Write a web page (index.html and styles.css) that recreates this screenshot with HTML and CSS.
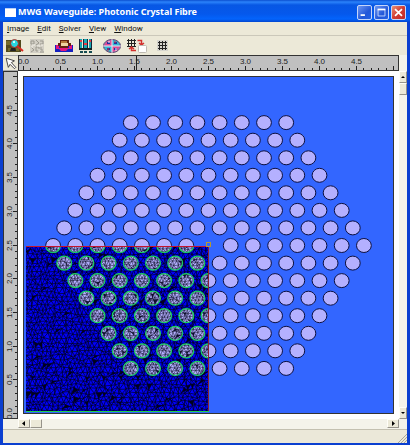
FILE: index.html
```html
<!DOCTYPE html>
<html lang="en">
<head>
<meta charset="utf-8">
<title>MWG Waveguide: Photonic Crystal Fibre</title>
<link rel="stylesheet" href="styles.css">
</head>
<body>
<div class="window">
  <header class="titlebar">
    <svg class="app-icon" viewBox="0 0 11 9"><rect width="11" height="9" fill="#fff"/><path d="M0 .5H11" stroke="#b8d0f8"/></svg>
    <h1 class="title">MWG Waveguide: Photonic Crystal Fibre</h1>
    <button class="caption" aria-label="Minimize"><svg viewBox="0 0 15 15"><path d="M3 10.5H8" stroke="#fff" stroke-width="2"/></svg></button>
    <button class="caption" aria-label="Maximize"><svg viewBox="0 0 15 15"><path d="M3.5 4V11.5H11.5V4" fill="none" stroke="#cfe0ff"/><path d="M3 4H12" stroke="#fff" stroke-width="2"/></svg></button>
    <button class="caption close" aria-label="Close"><svg viewBox="0 0 15 15"><path d="M3.5 3.5L11.5 11.5M11.5 3.5L3.5 11.5" stroke="#fff" stroke-width="2"/></svg></button>
  </header>
  <nav class="menubar">
    <button><u>I</u>mage</button><button><u>E</u>dit</button><button><u>S</u>olver</button><button><u>V</u>iew</button><button><u>W</u>indow</button>
  </nav>
  <div class="toolbar">
    <button class="tool" aria-label="Inspect image"><svg viewBox="0 0 18 14">
      <path d="M0 1H15V13H0Z" fill="#514a1d"/><path d="M0 2H4V6H0ZM2 9H6V12H2ZM10 9H13V12H10Z" fill="#756b2b"/><path d="M5 9H9L10 12H4Z" fill="#222"/>
      <circle cx="8.500" cy="4.500" r="4" fill="#27d7df" stroke="#b02a22"/><path d="M7 2H9V4H7Z" fill="#c8ffff"/><path d="M11 7L17 12" stroke="#d82920" stroke-width="2"/></svg></button>
    <button class="tool" aria-label="Materials" disabled><svg viewBox="0 0 14 14"><path d="M0 0H14V14H0Z" fill="#d2cfc5"/><g fill="none" stroke="#9b998f"><path d="M1 2H4V5H1ZM6 1L9 4L6 6M10 2H13V5H10M1 8L4 11L1 13M6 8H9V12H6ZM11 8V11H13M10 13H14"/></g><path d="M2 6H5M7 7H10M11 6H13M2 7V9M9 10V13" stroke="#f5f3eb"/></svg></button>
    <button class="tool gap" aria-label="Mode profile"><svg viewBox="0 0 18 14"><path d="M0 6H4L6 8H12L14 6H18V13H0Z" fill="#1622bf"/><path d="M1 6H4V9H14V6H17V10H13L11 12H6L4 10H1Z" fill="#e21680"/><path d="M5 1H14V4H16V7H13V9H5V7H3V4H5Z" fill="#63220e"/><path d="M6 2H12V4H6Z" fill="#b47838"/><path d="M6 4H13V7H6Z" fill="#efd3a0"/></svg></button>
    <button class="tool" aria-label="Layers"><svg viewBox="0 0 13 14"><path d="M0 0H3V9H0ZM5 0H8V9H5ZM10 0H13V9H10Z" fill="#18a8b0"/><path d="M.5 0V10M4.500 0V10M8.500 0V10M12.500 0V10" stroke="#16243c"/><path d="M1 2H3M5 5H8M10 2H12" stroke="#ed3942" stroke-width="2"/><path d="M0 9H13V11H0Z" fill="#122"/><path d="M1 12H4V14H1ZM5 12H8V14H5ZM10 12H13V14H10Z" fill="#174d52"/></svg></button>
    <button class="tool gap" aria-label="Field sectors"><svg viewBox="0 0 18 14"><ellipse cx="9" cy="7" rx="8.500" ry="6.500" fill="#36b5d3" stroke="#5b3b69"/><path d="M9 1A8 6 0 0 0 1 7H9ZM9 7H17A8 6 0 0 1 9 13Z" fill="#de4a96"/><path d="M9 0V14M0 7H18" stroke="#e8e8f4"/><path d="M4 4H7M11 4H14M4 10H7M11 10H14" stroke="#23319d" stroke-width="2"/><path d="M6 2V4M13 9V12" stroke="#fff"/><path d="M12 2V4M5 9V12" stroke="#d83546"/></svg></button>
    <button class="tool" aria-label="Swap mesh"><svg viewBox="0 0 20 14"><path d="M1.500 0V8M4.500 0V8M7.500 0V8M0 1.500H9M0 4.500H9M0 7.500H9" stroke="#222"/><path d="M10.500 1.500H14.500V5M12 4L14.500 6L17 4M9 11.500H4.500V8M2 10L4.500 8L7 10" fill="none" stroke="#d3302d" stroke-width="1.500"/><rect x="11.500" y="6.500" width="8" height="7" rx="1" fill="#fff" stroke="#bdbab2"/></svg></button>
    <button class="tool last" aria-label="Show mesh"><svg viewBox="0 0 11 11"><rect width="11" height="11" fill="#d6d5ce"/><path d="M2.500 1V10M5.500 1V10M8.500 1V10M1 2.500H10M1 5.500H10M1 8.500H10" stroke="#222"/></svg></button>
  </div>
  <main class="workspace">
    <button class="pointer" aria-label="Select"><svg viewBox="0 0 15 16"><path d="M2.500 2.500L12 5.500L8.500 7.500L13.500 13L12 14.500L7 9.500L5 13Z" fill="#fff" stroke="#333"/></svg></button>
    <svg class="ruler-top" id="rulerTop" viewBox="0 0 381 16" preserveAspectRatio="none"></svg>
    <svg class="ruler-left" id="rulerLeft" viewBox="0 0 15 348" preserveAspectRatio="none"></svg>
    <div class="canvas">
      <svg id="plot" viewBox="0 0 371 338" preserveAspectRatio="none" role="img" aria-label="Photonic crystal fibre cross-section"></svg>
    </div>
    <div class="scroll vertical">
      <button aria-label="Scroll up"><svg viewBox="0 0 6 10"><path d="M1 6L3 4L5 6Z"/></svg></button>
      <span class="thumb"></span>
      <span class="track"></span>
      <button aria-label="Scroll down"><svg viewBox="0 0 6 10"><path d="M1 4H5L3 6Z"/></svg></button>
    </div>
    <div class="scroll horizontal">
      <button aria-label="Scroll left"><svg viewBox="0 0 10 7"><path d="M6 1V6L3 3.500Z"/></svg></button>
      <span class="thumb"></span>
      <span class="track"></span>
      <button aria-label="Scroll right"><svg viewBox="0 0 10 7"><path d="M4 1V6L7 3.500Z"/></svg></button>
    </div>
  </main>
  <footer class="statusbar">
    <svg viewBox="0 0 9 9"><path d="M0 9L9 0M3 9L9 3M6 9L9 6" stroke="#aaa797"/></svg>
  </footer>
</div>
<script src="plot.js"></script>
</body>
</html>
```

FILE: styles.css
```css
* { box-sizing: border-box; }
body { margin: 0; font-family: Roboto, "Noto Sans", sans-serif; background: #ece9d8; }
button { border: 0; padding: 0; margin: 0; background: none; font: inherit; color: inherit; }
svg { display: block; }
.window {
  min-height: 100vh;
  display: grid;
  grid-template-rows: 22px 14px 19px 1fr 14px;
  border: solid #0b3fd0;
  border-width: 0 3px 3px;
  background: #ece9d8;
}
.titlebar {
  display: flex;
  align-items: center;
  gap: 2px;
  margin: 0 -3px;
  padding: 2px 4px 0 5px;
  background: linear-gradient(#0b4fd0, #2b83fb 2px, #0757e4 5px, #0558ec 14px, #0364fc 19px, #0346cf);
}
.app-icon { width: 11px; height: 9px; }
.title {
  flex: 1;
  margin: 0;
  color: #fff;
  font: bold 9px/16px "Noto Sans", sans-serif;
  white-space: nowrap;
}
.caption {
  width: 15px;
  height: 15px;
  border: 1px solid #c5d6fa;
  border-radius: 2px;
  background: linear-gradient(135deg, #6d97f3, #2257d8 60%, #2461e4);
}
.caption svg { width: 13px; height: 13px; }
.close { background: linear-gradient(135deg, #ea9277, #d13c32 50%, #bd2728); }
.menubar {
  display: flex;
  align-items: center;
  gap: 8px;
  padding: 0 4px;
  border-bottom: 1px solid #cbc8ba;
  font: 8px/12px Roboto, sans-serif;
  color: #111;
}
.toolbar { display: flex; align-items: center; gap: 6px; padding: 0 3px; }
.tool.gap { margin-left: 5px; }
.tool.last { margin-left: 4px; }
.tool svg { height: 14px; }
.tool.last svg { height: 11px; }
.workspace {
  display: grid;
  grid-template: 16px 1fr 10px / 15px 1fr 8px;
  background: #f4f3ea;
}
.pointer { background: #ece9d8; border: solid #aaa; border-width: 1px 0 1px 0; }
.pointer svg { width: 15px; height: 14px; }
.ruler-top, .ruler-left { width: 100%; height: 100%; background: #c0c0c0; font: 8px "Liberation Sans", sans-serif; fill: #222; }
.ruler-top { grid-area: 1 / 2; }
.ruler-left { grid-area: 2 / 1; }
.canvas { grid-area: 2 / 2; padding: 5px; background: #fff; }
.canvas svg { width: 100%; height: 100%; }
.scroll { display: flex; background: #f4f3ea; }
.scroll button, .thumb { background: #ece9d8; border: 1px solid #fffef8; border-right-color: #96938a; border-bottom-color: #96938a; }
.track { flex: 1; }
.vertical { grid-area: 2 / 3; flex-direction: column; }
.vertical button, .vertical .thumb { width: 8px; height: 12px; }
.vertical button svg { width: 6px; height: 10px; }
.horizontal { grid-area: 3 / 2; }
.horizontal button, .horizontal .thumb { width: 12px; height: 9px; }
.horizontal button svg { width: 10px; height: 7px; }
.statusbar {
  display: flex;
  justify-content: flex-end;
  align-items: flex-end;
  border-top: 1px solid #c3c0b0;
  background: #ebe8d9;
}
.statusbar svg { width: 9px; height: 9px; }
.border { fill: none; stroke: #333; }
.tick { fill: none; stroke: #222; shape-rendering: crispEdges; }
.hole { fill: #b4b0ff; stroke: #0c1040; }
.mesh-line { fill: none; stroke: #000018; }
```

FILE: plot.js
```js
const get = id => document.getElementById(id);

function drawRulers() {
  let ticks = '', labels = '';
  for (let i = 0; i <= 50; i++) {
    const x = Math.round(5 + i * 7.4) + 0.5;
    ticks += `M${x} 15V${i % 5 ? 13 : 11}`;
    if (i % 5 === 0 && i < 50) {
      labels += `<text x="${x}" y="9" text-anchor="middle">${(i / 10).toFixed(1)}</text>`;
    }
  }
  get('rulerTop').innerHTML = `<path class="tick" d="${ticks}M118.5 0V15"/>${labels}<rect class="border" x=".5" y=".5" width="380" height="15"/>`;
  ticks = ''; labels = '';
  for (let i = 0; i <= 50; i++) {
    const y = Math.round(342 - i * 6.74) + 0.5;
    ticks += `M14 ${y}H${i % 5 ? 12 : 10}`;
    if (i % 5 === 0 && i < 50) {
      labels += `<text transform="translate(9 ${y}) rotate(-90)" text-anchor="middle">${(i / 10).toFixed(1)}</text>`;
    }
  }
  get('rulerLeft').innerHTML = `<path class="tick" d="${ticks}"/>${labels}<rect class="border" x=".5" y=".5" width="14" height="347"/>`;
}

let seed = 71;
function random() {
  seed = (seed * 16807) % 2147483647;
  return seed / 2147483647;
}

// Triangulates a rectangle with a jittered staggered grid.
function mesh(x0, y0, x1, y1, step) {
  const rows = [];
  for (let y = y0 - step; y <= y1 + step; y += step) {
    const row = [];
    const shift = rows.length % 2 ? step / 2 : 0;
    for (let x = x0 - step; x <= x1 + step * 2; x += step) {
      row.push([x + shift + (random() - 0.5) * step * 0.7, y + (random() - 0.5) * step * 0.7]);
    }
    rows.push(row);
  }
  let lines = '', solid = '';
  const p = v => v[0].toFixed(1) + ' ' + v[1].toFixed(1);
  for (let r = 0; r < rows.length - 1; r++) {
    for (let c = 0; c < rows[r].length - 1; c++) {
      const a = rows[r][c], b = rows[r][c + 1], d = rows[r + 1][c], e = rows[r + 1][c + 1];
      lines += r % 2 ? `M${p(b)}L${p(a)}L${p(d)}M${p(a)}L${p(e)}` : `M${p(b)}L${p(a)}L${p(d)}L${p(b)}`;
      if (random() < 0.08) solid += `M${p(a)}L${p(b)}L${p(d)}Z`;
    }
  }
  return { lines, solid };
}

function drawPlot() {
  const cx = 185.5, cy = 169.5, dx = 22.2, dy = 17.55;
  const holes = [];
  for (let row = -7; row <= 7; row++) {
    const count = 15 - Math.abs(row);
    for (let i = 0; i < count; i++) {
      const x = cx + (i - (count - 1) / 2) * dx;
      if (row === 0 && i === 7) continue;
      holes.push([x, cy + row * dy]);
    }
  }
  const shapes = holes.map(([x, y]) => `<ellipse cx="${x.toFixed(1)}" cy="${y.toFixed(1)}" rx="7.4" ry="7"/>`).join('');
  const coarse = mesh(3, 170, 186, 337, 4.2);
  const fine = mesh(25, 170, 186, 310, 3.2);
  get('plot').innerHTML = `
    <defs>
      <clipPath id="quarter"><rect x="3" y="170" width="183" height="166"/></clipPath>
      <clipPath id="holes">${shapes}</clipPath>
    </defs>
    <rect width="371" height="338" fill="#3366ff"/>
    <g class="hole">${shapes}</g>
    <g clip-path="url(#quarter)">
      <rect x="3" y="170" width="183" height="166" fill="#0000fa"/>
      <path d="${coarse.solid}" fill="#000020"/>
      <path class="mesh-line" d="${coarse.lines}" stroke-width=".7"/>
      <g fill="#b4b0ff">${shapes}</g>
      <g clip-path="url(#holes)">
        <path d="${fine.solid}" fill="#101030"/>
        <path class="mesh-line" d="${fine.lines}" stroke-width=".5"/>
      </g>
      <g fill="none" stroke="#18d060" stroke-width="1.2">${shapes}</g>
    </g>
    <path d="M3 170.5H185.5" stroke="#c4142c" fill="none"/>
    <path d="M185.5 170V336" stroke="#8c2430" fill="none"/>
    <path d="M3 335.5H186" stroke="#20d050"/>
    <rect x="183.5" y="166.5" width="4" height="4" fill="none" stroke="#b89830"/>
    <rect class="border" x=".5" y=".5" width="370" height="337"/>`;
}

drawRulers();
drawPlot();
```
